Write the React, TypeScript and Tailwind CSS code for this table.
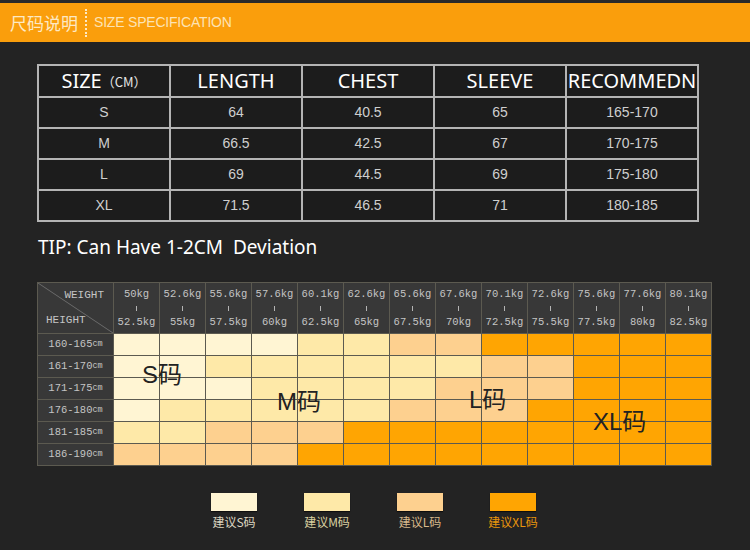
const weights = [
  ["50kg", "52.5kg"],
  ["52.6kg", "55kg"],
  ["55.6kg", "57.5kg"],
  ["57.6kg", "60kg"],
  ["60.1kg", "62.5kg"],
  ["62.6kg", "65kg"],
  ["65.6kg", "67.5kg"],
  ["67.6kg", "70kg"],
  ["70.1kg", "72.5kg"],
  ["72.6kg", "75.5kg"],
  ["75.6kg", "77.5kg"],
  ["77.6kg", "80kg"],
  ["80.1kg", "82.5kg"],
]

const heights = ["160-165", "161-170", "171-175", "176-180", "181-185", "186-190"]

// 0 = S, 1 = M, 2 = L, 3 = XL
const matrix = [
  [0, 0, 0, 0, 1, 1, 2, 2, 3, 3, 3, 3, 3],
  [0, 0, 1, 1, 1, 1, 1, 1, 2, 2, 3, 3, 3],
  [0, 0, 0, 1, 1, 1, 1, 2, 2, 2, 3, 3, 3],
  [0, 1, 1, 1, 1, 1, 2, 2, 2, 3, 3, 3, 3],
  [1, 1, 2, 2, 2, 3, 3, 3, 3, 3, 3, 3, 3],
  [2, 2, 2, 2, 3, 3, 3, 3, 3, 3, 3, 3, 3],
]

const cellBg = ["bg-[#fff5d3]", "bg-[#fee9a8]", "bg-[#fdd08f]", "bg-[#ffa502]"]

const sizes = [
  ["S", "64", "40.5", "65", "165-170"],
  ["M", "66.5", "42.5", "67", "170-175"],
  ["L", "69", "44.5", "69", "175-180"],
  ["XL", "71.5", "46.5", "71", "180-185"],
]

const legend = [
  { label: "建议S码", box: "bg-[#fff5d3]", text: "text-[#dcd5c0]" },
  { label: "建议M码", box: "bg-[#fee9a8]", text: "text-[#d9d0a0]" },
  { label: "建议L码", box: "bg-[#fdd08f]", text: "text-[#d8b98b]" },
  { label: "建议XL码", box: "bg-[#ffa502]", text: "text-[#e8950c]" },
]

const sans = "font-['Noto_Sans','Noto_Sans_CJK_SC',sans-serif]"
const mono = "font-['Liberation_Mono','DejaVu_Sans_Mono',monospace]"

export default function App() {
  return (
    <div className="w-[750px] h-[560px] bg-white overflow-hidden">
      <div className="h-[550px] bg-[#232323] flex flex-col">
        <div className="h-[3px] bg-[#2a2a2a]" />
        <header className="h-[39px] bg-[#fa9e0c] flex items-center pl-[10px]">
          <span className="text-[17px] text-[#fde9c4] font-['Noto_Sans_CJK_SC',sans-serif] leading-none">
            尺码说明
          </span>
          <span className="mx-[7px] h-[28px] border-l-2 border-dotted border-[#fde9c4]" />
          <span className="text-[14px] text-[#fde3b4] font-['Liberation_Sans',sans-serif] tracking-[-0.2px]">
            SIZE SPECIFICATION
          </span>
        </header>

        <SpecTable />

        <p className={`${sans} mt-[12px] ml-[38px] text-[19px] leading-[26px] text-white whitespace-pre`}>
          TIP: Can Have 1-2CM  Deviation
        </p>

        <SizeChart />

        <div className="flex mt-[27px] ml-[211px] gap-[47px]">
          {legend.map((l) => (
            <div key={l.label} className="w-[46px] flex flex-col items-center">
              <div className={`${l.box} w-[46px] h-[18px] shadow-[0_1px_1px_rgba(0,0,0,0.6)]`} />
              <span
                className={`${l.text} mt-[4px] text-[12px] leading-[14px] whitespace-nowrap font-['Noto_Sans_CJK_SC',sans-serif]`}
              >
                {l.label}
              </span>
            </div>
          ))}
        </div>
      </div>
    </div>
  )
}

function SpecTable() {
  const head = ["LENGTH", "CHEST", "SLEEVE", "RECOMMEDN"]
  return (
    <div className="mt-[22px] ml-[37px] w-fit grid grid-cols-[130px_130px_130px_130px_130px] gap-[2px] p-[2px] bg-[#b4b4b4]">
      <div className="h-[30px] bg-[#1c1c1c] flex items-center justify-center text-white">
        <span className={`${sans} text-[20px] leading-none`}>SIZE</span>
        <span className="text-[13px] leading-none text-[#e6e6e6] font-['Noto_Sans_CJK_SC',sans-serif]">
          （CM）
        </span>
      </div>
      {head.map((h) => (
        <div
          key={h}
          className={`${sans} h-[30px] bg-[#1c1c1c] flex items-center justify-center text-[20px] leading-none text-white whitespace-nowrap`}
        >
          {h}
        </div>
      ))}
      {sizes.map((row) =>
        row.map((v, i) => (
          <div
            key={row[0] + i}
            className="h-[29px] bg-[#1c1c1c] flex items-center justify-center text-[14px] text-[#cfcfcf] font-['Liberation_Sans',sans-serif]"
          >
            {v}
          </div>
        )),
      )}
    </div>
  )
}

function SizeChart() {
  return (
    <div className="relative mt-[22px] ml-[37px] w-fit">
      <div className="grid grid-cols-[75px_repeat(13,45px)] grid-rows-[50px_repeat(6,21px)] gap-px p-px bg-[#5c5a50]">
        <div className="relative bg-[#383838] text-[#c5c5c5]">
          <svg className="absolute inset-0" width="75" height="50">
            <line x1="0" y1="0" x2="75" y2="50" stroke="#6a6a6a" strokeWidth="1" />
          </svg>
          <span className={`${mono} absolute right-[9px] top-[7px] text-[11px] leading-none`}>WEIGHT</span>
          <span className={`${mono} absolute left-[8px] top-[32px] text-[11px] leading-none`}>HEIGHT</span>
        </div>
        {weights.map(([a, b]) => (
          <div
            key={a}
            className={`${mono} bg-[#383838] text-[#c5c5c5] flex flex-col items-center justify-center text-[10.5px] leading-[14px]`}
          >
            <span>{a}</span>
            <span className="h-[14px] flex items-center">
              <span className="block w-px h-[5px] bg-[#b5b5b5]" />
            </span>
            <span>{b}</span>
          </div>
        ))}
        {heights.map((h, r) => (
          <Row key={h} label={h} cells={matrix[r]} />
        ))}
      </div>
      <Mark className="left-[105px] top-[81px]">S码</Mark>
      <Mark className="left-[240px] top-[108px]">M码</Mark>
      <Mark className="left-[432px] top-[106px]">L码</Mark>
      <Mark className="left-[556px] top-[128px]">XL码</Mark>
    </div>
  )
}

function Row({ label, cells }: { label: string; cells: number[] }) {
  return (
    <>
      <div className={`${mono} bg-[#383838] text-[#c5c5c5] flex items-center justify-center text-[10.5px]`}>
        {label}
        <span className="text-[8.5px]">cm</span>
      </div>
      {cells.map((c, i) => (
        <div key={i} className={cellBg[c]} />
      ))}
    </>
  )
}

function Mark({ children, className }: { children: string; className: string }) {
  return (
    <span
      className={`${className} absolute text-[24px] leading-[24px] text-[#222] font-['Liberation_Sans','Noto_Sans_CJK_SC',sans-serif]`}
    >
      {children}
    </span>
  )
}
